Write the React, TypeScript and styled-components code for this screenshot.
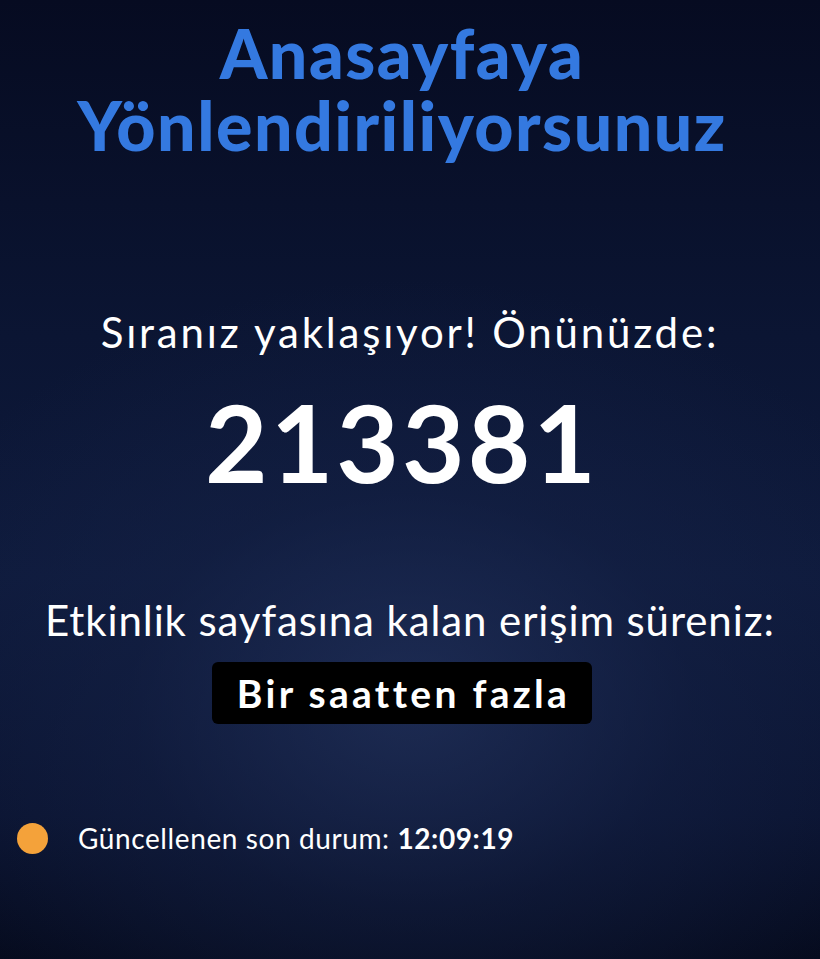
import React from "react";
import styled, { createGlobalStyle } from "styled-components";

const Global = createGlobalStyle`
  html, body { margin: 0; padding: 0; height: 100%; }
  body { background: #060b20; font-family: Lato, "Noto Sans", sans-serif; }
  #root { min-height: 100%; }
`;

const Page = styled.div`
  width: 820px;
  height: 959px;
  overflow: hidden;
  background:
    radial-gradient(ellipse 560px 420px at 410px 700px, rgba(36, 52, 95, 0.7) 0%, rgba(22, 35, 72, 0.45) 50%, rgba(8, 14, 38, 0) 100%),
    linear-gradient(180deg, #060b21 0%, #0b1533 35%, #0e1a3c 60%, #0a1330 85%, #050a1c 100%);
  display: flex;
  flex-direction: column;
  align-items: center;
  color: #ffffff;
`;

const Title = styled.h1`
  margin: 17px 16px 0 0;
  font-family: Lato, sans-serif;
  font-weight: 900;
  font-size: 68px;
  line-height: 72px;
  color: #3479e0;
  text-align: center;
  letter-spacing: 1.5px;
`;

const Lead = styled.p<{ $top: number; $spacing: number }>`
  margin: ${(p) => p.$top}px 0 0;
  font-size: 42px;
  line-height: 48px;
  font-weight: 400;
  text-align: center;
  letter-spacing: ${(p) => p.$spacing}px;
  white-space: nowrap;
`;

const Count = styled.div`
  margin: 30px 16px 0 0;
  font-size: 108px;
  line-height: 110px;
  font-weight: 700;
  letter-spacing: 3px;
`;

const Badge = styled.div`
  margin: 18px 16px 0 0;
  background: #000;
  border-radius: 6px;
  padding: 0 22px 0 25px;
  height: 62px;
  display: flex;
  align-items: center;
  font-size: 39px;
  font-weight: 700;
  letter-spacing: 3.3px;
`;

const Status = styled.div`
  align-self: stretch;
  margin-top: 97px;
  padding-left: 17px;
  display: flex;
  align-items: center;
  gap: 30px;
  height: 34px;
  font-size: 28px;
  letter-spacing: 0.6px;
`;

const Dot = styled.span`
  width: 31px;
  height: 31px;
  border-radius: 50%;
  background: #f4a23a;
  flex: none;
`;

const Time = styled.b`
  font-weight: 700;
`;

export default function App() {
  return (
    <>
      <Global />
      <Page>
        <Title>
          Anasayfaya
          <br />
          Yönlendiriliyorsunuz
        </Title>
        <Lead $top={147} $spacing={2.8}>
          Sıranız yaklaşıyor! Önünüzde:
        </Lead>
        <Count>213381</Count>
        <Lead $top={100} $spacing={0.9}>
          Etkinlik sayfasına kalan erişim süreniz:
        </Lead>
        <Badge>Bir saatten fazla</Badge>
        <Status>
          <Dot />
          <span>
            Güncellenen son durum: <Time>12:09:19</Time>
          </span>
        </Status>
      </Page>
    </>
  );
}
